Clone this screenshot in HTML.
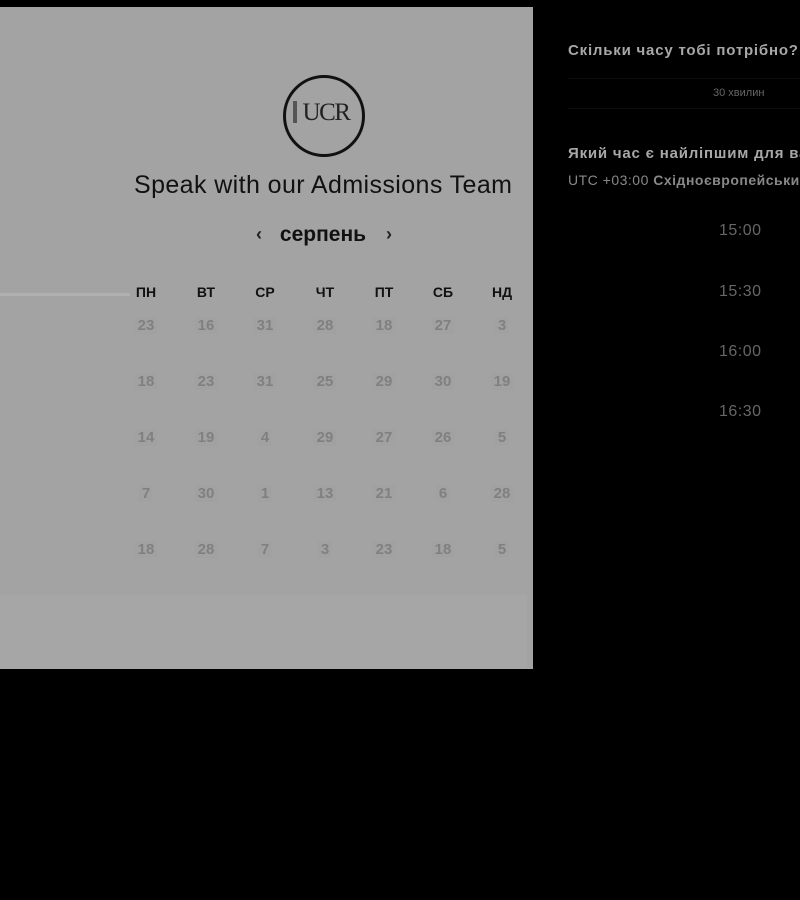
<!DOCTYPE html>
<html><head><meta charset="utf-8"><style>
html,body{margin:0;width:800px;height:900px;overflow:hidden}
body{background:#000;position:relative;font-family:"Liberation Sans",sans-serif}
.w{position:absolute;left:0;top:0;width:800px;height:900px;overflow:hidden}
.p{position:absolute;left:0;top:7px;width:533px;height:662px;background:#a3a3a3}
.ft{position:absolute;left:0;top:595px;width:527px;height:74px;background:#a6a6a6}
.a{position:absolute;white-space:nowrap}
.c{position:absolute;transform:translateX(-50%);white-space:nowrap}
.h{font-weight:bold;font-size:14px;color:#111;top:284px}
.n{font-weight:bold;font-size:15px;color:#808080;background:#a1a1a1;padding:0 3px}
.t{font-size:16px;color:#666;letter-spacing:.5px}
</style></head><body><div class="w">
<div class="p"></div><div class="ft"></div>
<div class="a" style="left:0;top:293px;width:130px;height:3px;background:#b0b0b0"></div>
<div class="a" style="left:283px;top:75px;width:82px;height:82px;border:3px solid #111;border-radius:50%;box-sizing:border-box"></div>
<div class="c" style="left:326px;top:99px;font-family:'Liberation Serif',serif;font-size:25px;color:#222;letter-spacing:-1.5px">UCR</div>
<div class="a" style="left:293px;top:101px;width:4px;height:22px;background:#555"></div>
<div class="a" style="left:134px;top:171px;font-size:25px;color:#111;letter-spacing:0.4px">Speak with our Admissions Team</div>
<div class="c" style="left:259px;top:224px;font-size:18px;color:#222;font-weight:bold">‹</div>
<div class="c" style="left:323px;top:223px;font-size:21px;color:#111;font-weight:bold">серпень</div>
<div class="c" style="left:389px;top:224px;font-size:18px;color:#222;font-weight:bold">›</div>
<div class="c h" style="left:146px">ПН</div><div class="c h" style="left:206px">ВТ</div><div class="c h" style="left:265px">СР</div><div class="c h" style="left:325px">ЧТ</div><div class="c h" style="left:384px">ПТ</div><div class="c h" style="left:443px">СБ</div><div class="c h" style="left:502px">НД</div>
<div id="g"></div>
<div class="a" style="left:568px;top:42px;font-size:15px;font-weight:bold;color:#a8a8a8;letter-spacing:0.8px">Скільки часу тобі потрібно?</div>
<div class="a" style="left:568px;top:78px;width:232px;height:1px;background:#0c0c0c"></div>
<div class="a" style="left:713px;top:87px;font-size:11px;color:#666">30 хвилин</div>
<div class="a" style="left:568px;top:108px;width:232px;height:1px;background:#0c0c0c"></div>
<div class="a" style="left:568px;top:145px;font-size:15px;font-weight:bold;color:#a8a8a8;letter-spacing:0.8px">Який час є найліпшим для вас?</div>
<div class="a" style="left:568px;top:172px;font-size:14px;color:#888;letter-spacing:0.5px">UTC +03:00 <b>Східноєвропейський час</b></div>
<div class="a t" style="left:719px;top:222px">15:00</div>
<div class="a t" style="left:719px;top:283px">15:30</div>
<div class="a t" style="left:719px;top:343px">16:00</div>
<div class="a t" style="left:719px;top:403px">16:30</div>
</div>
<script>
var d=[[23,16,31,28,18,27,3],[18,23,31,25,29,30,19],[14,19,4,29,27,26,5],[7,30,1,13,21,6,28],[18,28,7,3,23,18,5]];
var xs=[146,206,265,325,384,443,502],s='';
d.forEach(function(r,i){r.forEach(function(v,j){s+='<div class="c n" style="left:'+xs[j]+'px;top:'+(317+i*56)+'px">'+v+'</div>'})});
document.getElementById('g').innerHTML=s;
</script>
</body></html>
